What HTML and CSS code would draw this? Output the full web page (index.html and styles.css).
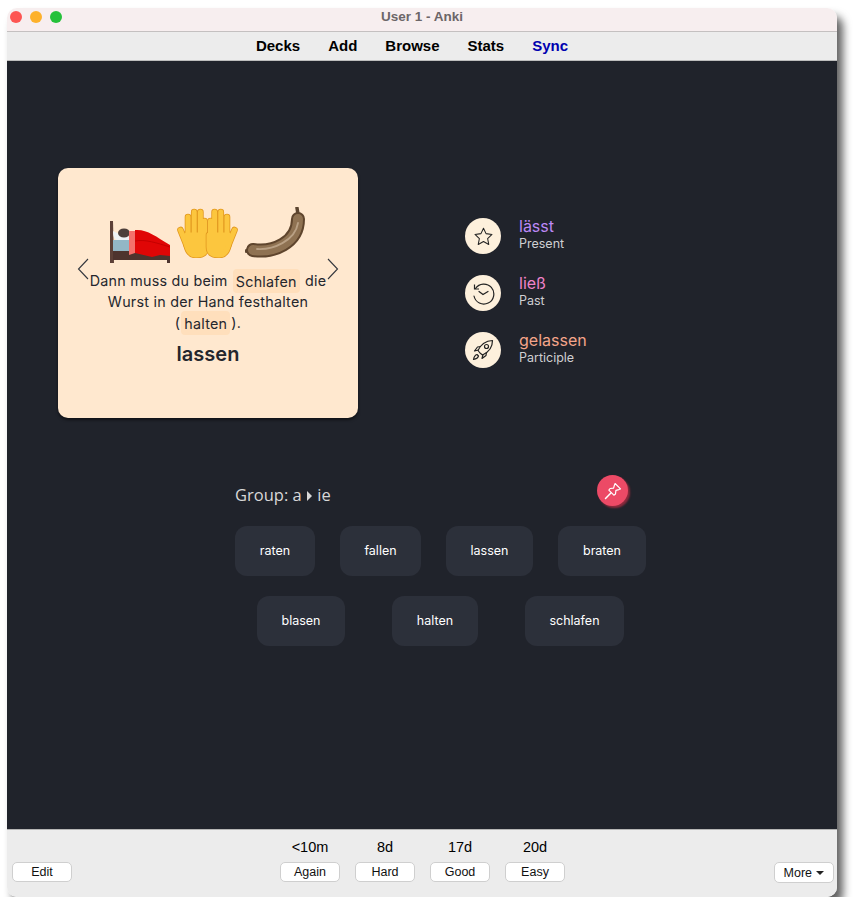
FILE: index.html
```html
<!DOCTYPE html>
<html lang="de">
<head>
<meta charset="UTF-8" />
<meta name="viewport" content="width=device-width, initial-scale=1" />
<title>User 1 - Anki</title>
<link rel="stylesheet" href="styles.css">
</head>
<body>
  <div class="window">
    <div class="titlebar">
      <div class="lights">
        <span class="light light-red"></span>
        <span class="light light-yellow"></span>
        <span class="light light-green"></span>
      </div>
      <div class="title">User 1 - Anki</div>
    </div>

    <nav class="toolbar">
      <a>Decks</a>
      <a>Add</a>
      <a>Browse</a>
      <a>Stats</a>
      <a class="sync">Sync</a>
    </nav>

    <main class="review">
      <div class="top">
        <section class="card">
          <svg class="chevron chevron-left" viewBox="0 0 12 22" width="12" height="22"><path d="M11 1 1.500 11 11 21" fill="none" stroke="#33363d" stroke-width="1.100"/></svg>
          <svg class="chevron chevron-right" viewBox="0 0 12 22" width="12" height="22"><path d="M1 1 10.500 11 1 21" fill="none" stroke="#33363d" stroke-width="1.100"/></svg>

          <div class="emojis">
            <!-- bed -->
            <svg class="emoji-bed" viewBox="0 0 60 42" width="60" height="42">
              <path d="M0 0h3l1 42H0z" fill="#5d4037"/>
              <rect x="3" y="30" width="57" height="9" fill="#4e342e"/>
              <rect x="57" y="28" width="3" height="14" fill="#4e342e"/>
              <rect x="3" y="19" width="18" height="11" fill="#93b7c6"/>
              <path d="M3 10c5 3 12 5 18 6v3H7C4 18 3 15 3 10z" fill="#eef2f4"/>
              <ellipse cx="14" cy="12" rx="6" ry="4.500" fill="#4d3f3a"/>
              <path d="M19 10h6v22l-6 2z" fill="#f4716b"/>
              <path d="M25 9c12-1 20 6 35 15v11l-10-1-8 2-17-4z" fill="#e00606"/>
              <path d="M25 20c10-2 22 2 35 6" fill="none" stroke="#c40000" stroke-width="1"/>
            </svg>
            <!-- open hands -->
            <svg class="emoji-hands" viewBox="0 0 61 51" width="61" height="51">
              <defs>
                <g id="hand-shape" stroke-linecap="round" stroke-linejoin="round">
                  <path d="M11 10V30M17.200 5V30M23.400 5V30M27.500 14V30M3.500 23 9.500 38" fill="none"/>
                  <path d="M9.500 28H29V40C29 46 25 48 19 48 14 48 11 45 9.500 38z"/>
                </g>
              </defs>
              <g id="hand">
                <use href="#hand-shape" fill="#e2981f" stroke="#e2981f" stroke-width="6.600"/>
                <use href="#hand-shape" fill="#fcc63e" stroke="#fcc63e" stroke-width="5"/>
              </g>
              <use href="#hand" transform="matrix(-1 0 0 1 61 0)"/>
            </svg>
            <!-- sausage -->
            <svg class="emoji-sausage" viewBox="0 0 62 52" width="62" height="52">
              <path d="M52 1 53 7M1 44 6 45" stroke="#5c4530" stroke-width="3.500" stroke-linecap="round"/>
              <path d="M8 43C28 46 53 36 53 12" fill="none" stroke="#5f452d" stroke-width="14" stroke-linecap="round"/>
              <path d="M8 43C28 46 53 36 53 12" fill="none" stroke="#8f7252" stroke-width="10" stroke-linecap="round"/>
              <path d="M12 42C28 43 50 34 53 16" fill="none" stroke="#b9a084" stroke-width="1.800" stroke-linecap="round"/>
            </svg>
          </div>

          <p class="sentence">
            Dann muss du beim <span class="chip">Schlafen</span> die<br>
            Wurst in der Hand festhalten<br>
            (<span class="chip">halten</span>).
          </p>
          <h2 class="infinitive">lassen</h2>
        </section>

        <ul class="forms">
          <li class="form">
            <span class="form-icon">
              <svg viewBox="0 0 24 24" width="21" height="21"><path d="m12 2.500 2.900 6.200 6.800.9-5 4.700 1.300 6.800-6-3.300-6 3.300 1.300-6.800-5-4.700 6.800-.9z" fill="none" stroke="#222" stroke-width="1.200" stroke-linejoin="round"/></svg>
            </span>
            <div class="form-text">
              <div class="form-word word-present">lässt</div>
              <div class="form-label">Present</div>
            </div>
          </li>
          <li class="form">
            <span class="form-icon">
              <svg viewBox="0 0 24 24" width="24" height="24"><path d="M4.500 7.500A10 10 0 1 1 3 15" fill="none" stroke="#222" stroke-width="1.200" stroke-linecap="round"/><path d="M3.500 3.500v4.500h4.500" fill="none" stroke="#222" stroke-width="1.200"/><path d="m8 10.500 4 3 5-3" fill="none" stroke="#222" stroke-width="1.200" stroke-linecap="round"/></svg>
            </span>
            <div class="form-text">
              <div class="form-word word-past">ließ</div>
              <div class="form-label">Past</div>
            </div>
          </li>
          <li class="form">
            <span class="form-icon">
              <svg viewBox="0 0 24 24" width="24" height="24" fill="none" stroke="#222" stroke-width="1.200" stroke-linejoin="round"><path d="M9 15 7 12.500C10 6 15 2.800 21.500 2.500 21.500 9 18 14 11.500 17z"/><circle cx="15.500" cy="8.500" r="2"/><path d="M7.500 12 3.500 13l3-4 3.500-.5M12 16.500 11 20.500l4-3 .5-3.500"/><path d="M6 16.500c-2 .5-3 2.500-3.500 5 2.500-.5 4.500-1.500 5-3.500z"/></svg>
            </span>
            <div class="form-text">
              <div class="form-word word-participle">gelassen</div>
              <div class="form-label">Participle</div>
            </div>
          </li>
        </ul>
      </div>

      <section class="group">
        <div class="group-head">
          <div class="group-title">Group: a <span class="arrow"></span> ie</div>
          <button type="button" class="pin">
            <svg viewBox="0 0 24 24" width="20" height="20" fill="none" stroke="#fff" stroke-width="1.400" stroke-linejoin="round"><path d="m14.500 3 6.500 6.500-2 .8-3.500 1-.5 4.200-2 1.500-6-6 1.500-2 4.200-.5 1-3.500z"/><path d="M9.500 14.500 3 21" stroke-linecap="round" stroke-width="1.800"/></svg>
          </button>
        </div>
        <div class="words words-first">
          <button type="button" class="word">raten</button>
          <button type="button" class="word">fallen</button>
          <button type="button" class="word">lassen</button>
          <button type="button" class="word">braten</button>
        </div>
        <div class="words words-second">
          <button type="button" class="word">blasen</button>
          <button type="button" class="word">halten</button>
          <button type="button" class="word">schlafen</button>
        </div>
      </section>
    </main>

    <footer class="bottom">
      <button type="button" class="btn">Edit</button>
      <div class="answers">
        <div class="answer"><span class="due">&lt;10m</span><button type="button" class="btn">Again</button></div>
        <div class="answer"><span class="due">8d</span><button type="button" class="btn">Hard</button></div>
        <div class="answer"><span class="due">17d</span><button type="button" class="btn">Good</button></div>
        <div class="answer"><span class="due">20d</span><button type="button" class="btn">Easy</button></div>
      </div>
      <button type="button" class="btn btn-more">More <span class="caret"></span></button>
    </footer>
  </div>
</body>
</html>
```

FILE: styles.css
```css
:root {
  --dark: #20232b;
  --cream: #ffe8cf;
  --bar: #ececec;
}

* {
  box-sizing: border-box;
}

body {
  margin: 0;
  background: #fff;
  font-family: 'Liberation Sans', Arial, sans-serif;
}

.window {
  display: flex;
  flex-direction: column;
  width: 830px;
  height: 889px;
  margin: 8px 0 0 7px;
  border-radius: 10px;
  overflow: hidden;
  box-shadow: 6px 8px 9px rgba(0, 0, 0, 0.62);
}

.titlebar {
  position: relative;
  height: 24px;
  background: #f7eeef;
  border-bottom: 1px solid #c4c0c0;
  flex: none;
}

.lights {
  display: flex;
  gap: 8px;
  padding: 3px 0 0 3px;
}

.light {
  width: 12px;
  height: 12px;
  border-radius: 50%;
}
.light-red { background: #fd5552; }
.light-yellow { background: #fdb12b; }
.light-green { background: #25c13a; }

.title {
  position: absolute;
  left: 0;
  right: 0;
  top: 1px;
  text-align: center;
  font-size: 13.5px;
  font-weight: bold;
  color: #6c6668;
}

.toolbar {
  display: flex;
  justify-content: center;
  gap: 28px;
  height: 29px;
  padding: 5px 20px 0 0;
  flex: none;
  background: var(--bar);
  border-bottom: 1px solid #bdbdbd;
  font-size: 15px;
  font-weight: bold;
  color: #000;
}

.sync {
  color: #0000b0;
}

.review {
  flex: 1;
  background: var(--dark);
  padding-top: 107px;
}

.top {
  display: flex;
  padding-left: 51px;
}

.card {
  position: relative;
  width: 300px;
  height: 250px;
  padding-top: 39px;
  background: var(--cream);
  border-radius: 10px;
  box-shadow: 0 2px 3px rgba(0, 0, 0, 0.5);
  text-align: center;
  color: #24262d;
  font-family: Inter, sans-serif;
}

.chevron {
  position: absolute;
  top: 90px;
}
.chevron-left { left: 19px; }
.chevron-right { right: 19px; }

.emojis {
  display: flex;
  justify-content: center;
  align-items: flex-end;
  gap: 7px;
  height: 56px;
}

.emoji-hands {
  margin-bottom: 5px;
}

.emoji-sausage {
  margin-bottom: 4px;
}

.sentence {
  margin: 7px 0 0;
  font-size: 14.3px;
  line-height: 21px;
  letter-spacing: 0.25px;
}

.chip {
  padding: 3.5px 3px;
  margin: 0 1px;
  background: #ffdfbc;
  border-radius: 4px;
}

.infinitive {
  margin: 9px 0 0;
  font-size: 20px;
  line-height: 24px;
  font-weight: 600;
}

.forms {
  list-style: none;
  margin: 50px 0 0 107px;
  padding: 0;
}

.form {
  display: flex;
  align-items: center;
  gap: 18px;
  height: 36px;
  margin-bottom: 21px;
  font-family: Inter, sans-serif;
}

.form-icon {
  display: flex;
  align-items: center;
  justify-content: center;
  width: 36px;
  height: 36px;
  border-radius: 50%;
  background: #fdf0dc;
}

.form-text {
  padding-bottom: 2px;
}

.form-word {
  margin-bottom: 1px;
  font-size: 16px;
  line-height: 17px;
}
.word-present { color: #bd88f6; }
.word-past { color: #f082c8; }
.word-participle { color: #f5a58a; }

.form-label {
  font-size: 12.5px;
  line-height: 16px;
  color: #cfcfd2;
}

.group {
  width: 411px;
  margin: 57px 0 0 228px;
}

.group-head {
  display: flex;
  justify-content: space-between;
  align-items: center;
  height: 31px;
  padding-right: 18px;
}

.group-title {
  position: relative;
  top: 4px;
  font-family: 'Open Sans', sans-serif;
  font-size: 16.5px;
  color: #d8d8d8;
}

.arrow {
  display: inline-block;
  margin: 0 1px;
  border-left: 5px solid #d8d8d8;
  border-top: 5px solid transparent;
  border-bottom: 5px solid transparent;
}

.pin {
  display: flex;
  align-items: center;
  justify-content: center;
  width: 31px;
  height: 31px;
  padding: 0;
  border: none;
  border-radius: 50%;
  background: #ec4a66;
  box-shadow: 2px 2px 2px #8e2a3d;
}

.words {
  display: grid;
  justify-content: space-between;
  margin-top: 20px;
}

.words-first {
  grid-template-columns: 80px 81px 87px 88px;
}

.words-second {
  grid-template-columns: 88px 86px 99px;
  padding: 0 22px;
}

.word {
  height: 50px;
  padding: 0 0 2px;
  border: none;
  border-radius: 12px;
  background: #2c303a;
  color: #fff;
  font-family: Inter, sans-serif;
  font-size: 12.5px;
  font-weight: 400;
}

.bottom {
  position: relative;
  display: flex;
  justify-content: space-between;
  align-items: flex-start;
  height: 68px;
  flex: none;
  padding: 32px 3px 0 5px;
  background: var(--bar);
  border-top: 1px solid #b5b5b5;
}

.answers {
  position: absolute;
  left: 273px;
  top: 9px;
  display: flex;
  gap: 15px;
}

.answer {
  display: flex;
  flex-direction: column;
  align-items: center;
  gap: 6px;
}

.due {
  font-size: 14.5px;
  line-height: 17px;
  color: #000;
}

.btn {
  width: 60px;
  height: 20px;
  padding: 0;
  background: #fff;
  border: 1px solid #cfcfcf;
  border-radius: 5px;
  font-family: 'Liberation Sans', Arial, sans-serif;
  font-size: 12.5px;
  color: #111;
}

.btn-more {
  height: 21px;
}

.caret {
  display: inline-block;
  margin-left: 1px;
  vertical-align: 2px;
  border-top: 4px solid #222;
  border-left: 4px solid transparent;
  border-right: 4px solid transparent;
}
```
